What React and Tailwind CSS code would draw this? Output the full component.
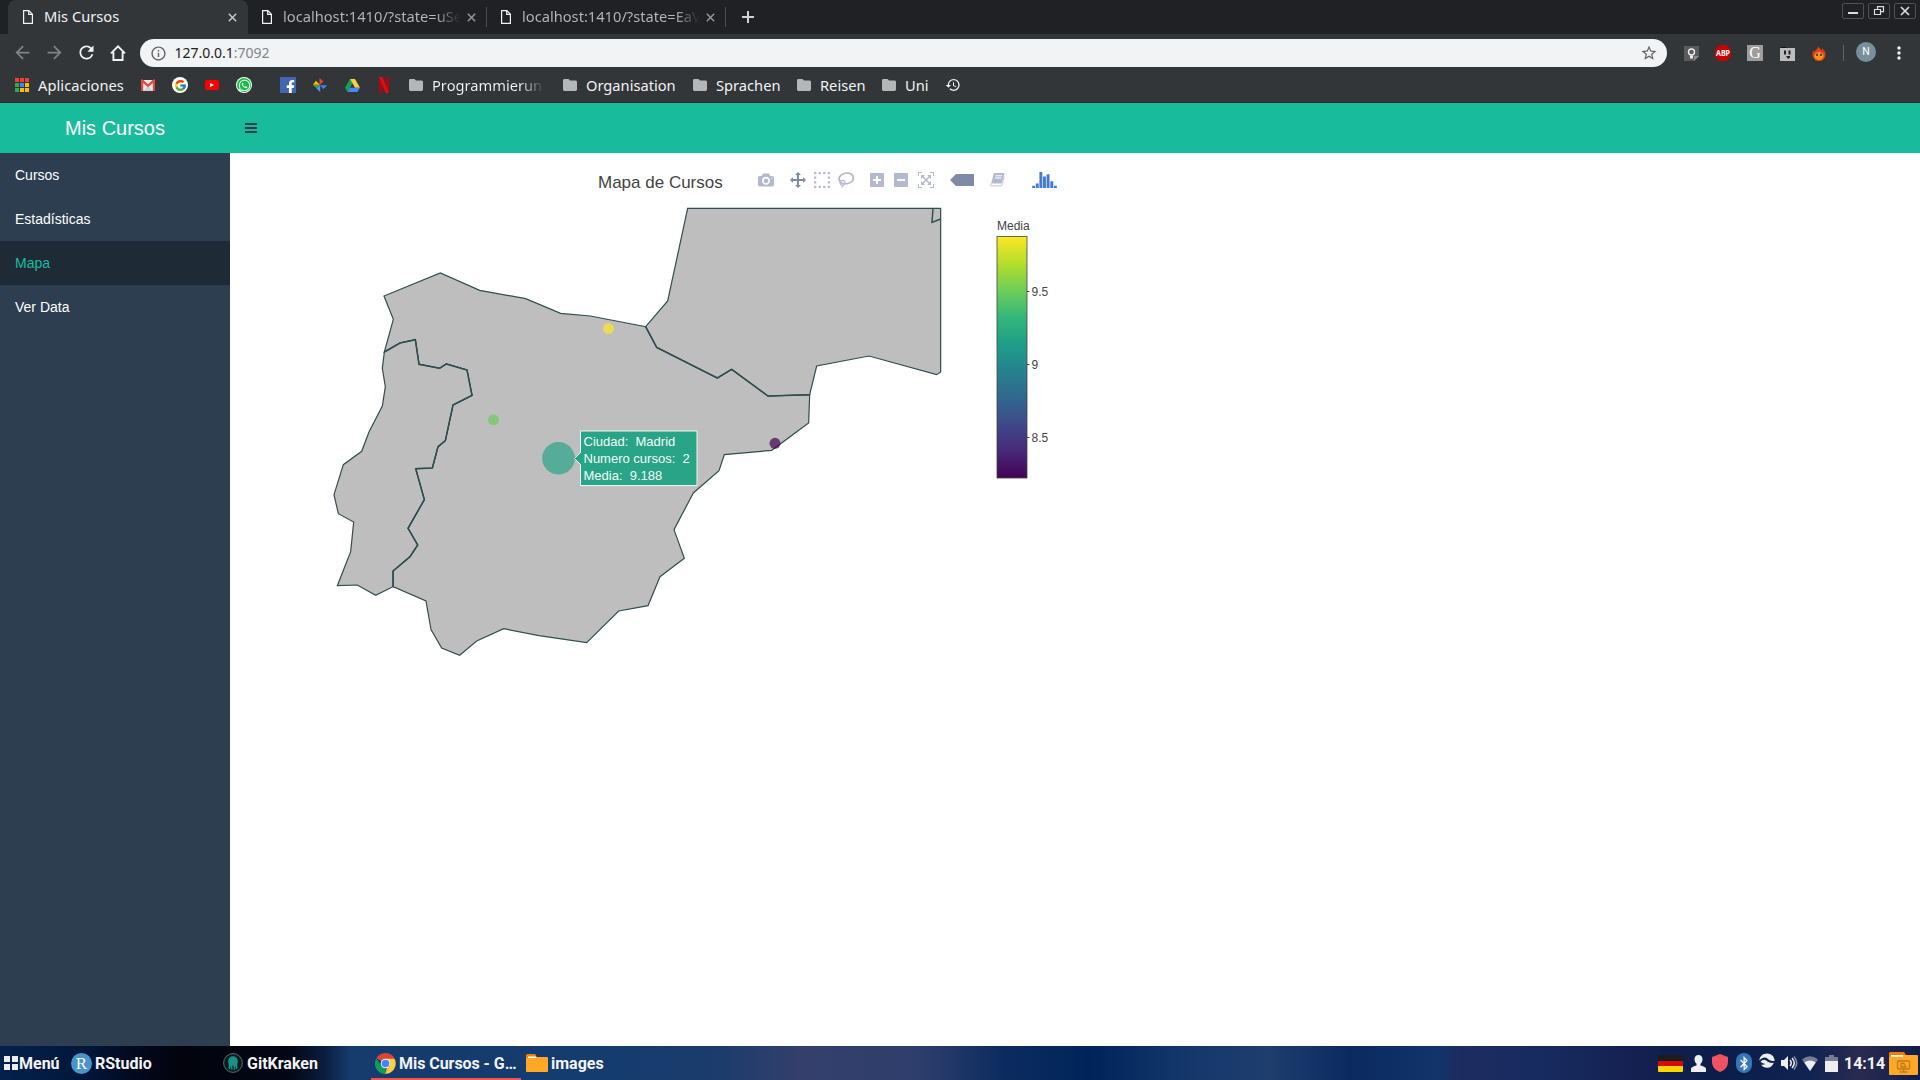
import React from "react";
import {
  MdArrowBack,
  MdArrowForward,
  MdRefresh,
  MdInfoOutline,
  MdStarBorder,
  MdHistory,
} from "react-icons/md";
import { FaWhatsapp, FaFacebookF, FaBluetoothB } from "react-icons/fa";
import { FcGoogle } from "react-icons/fc";

const FileIcon = () => (
  <svg className="block h-[14px] w-[10px]" viewBox="0 0 10 14" fill="none" stroke="#f1f3f4" strokeWidth="1.2">
    <path d="M.6.6h5.3l3.5 3.6v9.2H.6z M5.7.6v3.8h3.7" />
  </svg>
);

const CloseIcon = ({ className }) => (
  <svg className={className} viewBox="0 0 9 9" stroke="currentColor" strokeWidth="1.5">
    <path d="M.8.8l7.4 7.4M8.2.8L.8 8.2" />
  </svg>
);

function InactiveTab({ title }) {
  return (
    <div className="flex h-[34px] w-[239px] items-center">
      <div className="ml-[14px] h-[14px] w-[10px]">
        <FileIcon />
      </div>
      <div className="-mt-[2px] ml-[11px] w-[178px] overflow-hidden bg-gradient-to-r from-[#b6b9bd] from-86% to-[#202124] to-100% bg-clip-text whitespace-nowrap text-transparent">
        {title}
      </div>
      <CloseIcon className="ml-[6px] h-[9px] w-[9px] text-[#94979b]" />
      <div className="ml-auto h-5 w-px bg-[#4b4d51]" />
    </div>
  );
}

function WindowButton({ children }) {
  return (
    <div className="flex h-4 w-[22px] items-center justify-center rounded-[2px] border border-[#505153]">
      <svg className="h-[14px] w-[20px]" viewBox="0 0 20 14" fill="none" stroke="#dcdcdc" strokeWidth="1.5">
        {children}
      </svg>
    </div>
  );
}

function TabStrip() {
  return (
    <div className="flex h-[34px] bg-[#202124] text-[14.67px]">
      <div className="ml-2 flex h-[34px] w-[240px] items-center rounded-t-lg bg-[#323639] text-[#f1f3f4]">
        <div className="ml-[15px] h-[14px] w-[10px]">
          <FileIcon />
        </div>
        <span className="-mt-[2px] ml-[11px]">Mis Cursos</span>
        <CloseIcon className="mr-[11px] ml-auto h-[9px] w-[9px] text-[#c6c8ca]" />
      </div>
      <InactiveTab title="localhost:1410/?state=uSe" />
      <InactiveTab title="localhost:1410/?state=EaV" />
      <svg className="mt-[11px] ml-4 h-3 w-3" viewBox="0 0 12 12" stroke="#cfd1d4" strokeWidth="2">
        <path d="M6 0v12M0 6h12" />
      </svg>
      <div className="mt-[3px] mr-1 ml-auto flex gap-1">
        <WindowButton>
          <path d="M5 9h10" strokeWidth="2" />
        </WindowButton>
        <WindowButton>
          <path d="M5.500 5.500h6v5h-6zM8.500 5V2.700h6v5h-2.500" strokeWidth="1.200" />
        </WindowButton>
        <WindowButton>
          <path d="M6 3l8 8M14 3l-8 8" strokeWidth="1.700" />
        </WindowButton>
      </div>
    </div>
  );
}

function Toolbar() {
  return (
    <div className="flex h-[36px] items-center bg-[#323639] pt-[2px]">
      <MdArrowBack className="ml-[12px] -mt-[2px] h-[21px] w-[21px] text-[#808386]" />
      <MdArrowForward className="ml-[11px] -mt-[2px] h-[21px] w-[21px] text-[#808386]" />
      <MdRefresh className="ml-[11px] -mt-[2px] h-[21px] w-[21px] text-[#f1f3f4]" />
      <svg className="ml-[13px] -mt-[1px] h-4 w-4" viewBox="0 0 16 16" fill="none" stroke="#f1f3f4" strokeWidth="1.900">
        <path d="M1 8.300L8 1.300l7 7M3.400 7v8h9.200V7" />
      </svg>
      <div className="ml-[14px] flex h-[28px] w-[1527px] items-center rounded-full bg-[#f1f3f4] text-sm text-[#202124]">
        <MdInfoOutline className="ml-[9.500px] h-[17px] w-[17px] text-[#5f6368]" />
        <span className="ml-[8px]">
          127.0.0.1<span className="text-[#80868b]">:7092</span>
        </span>
        <MdStarBorder className="mr-[9px] ml-auto h-[18px] w-[18px] text-[#5f6368]" />
      </div>
      <svg className="ml-[17px] h-[15px] w-[15px]" viewBox="0 0 15 15">
        <path d="M0 0h15v10l-5 5H0z" fill="#5b5b5b" />
        <path d="M15 10h-5v5z" fill="#8b8b8b" />
        <circle cx="7.500" cy="6" r="3" fill="none" stroke="#eee" strokeWidth="1.400" />
        <path d="M6 9.500h3v3H6z" fill="#eee" />
      </svg>
      <svg className="ml-4 h-4 w-4" viewBox="0 0 16 16">
        <path d="M4.700 0h6.600L16 4.700v6.600L11.300 16H4.700L0 11.300V4.700z" fill="#c80000" />
        <text x="8" y="10.900" textAnchor="middle" fontSize="8" fontWeight="700" fill="#fff" textLength="14" lengthAdjust="spacingAndGlyphs">ABP</text>
      </svg>
      <div className="ml-4 flex h-4 w-4 items-center justify-center bg-[#9d9d9d] font-['Liberation_Serif'] text-[16px] leading-none text-white">
        G
      </div>
      <svg className="ml-[17px] h-[15px] w-[15px]" viewBox="0 0 15 15">
        <path d="M0 2h15v13H0z" fill="#bdbdbd" />
        <path d="M1 1h5v1H1z" fill="#111" />
        <path d="M4 4.500h2v4H4zM8.500 4.500h2v4h-2zM6 10h4v1.500l-2 1.500z" fill="#222" />
      </svg>
      <svg className="ml-[17px] h-[15px] w-[14px]" viewBox="0 0 14 15">
        <path d="M6 0c.5 2 3 2.500 3.500 4.500.8-.7 1-1.500.7-2.700C12 3.500 11.500 5 12 6c.4-.4.6-1 .6-1.600C14 7 13.600 9 13 11a6.400 6.400 0 0 1-12 0C.4 9 0 7 1.400 4.400c0 .6.200 1.200.6 1.600C3 4 6 3 6 0z" fill="#e0401a" />
        <ellipse cx="7" cy="10" rx="4.600" ry="4" fill="#f9960f" />
        <path d="M4.300 7.800h1.500v2.200H4.300zM8.300 7.800h1.500v2.200H8.300z" fill="#3a1a10" />
      </svg>
      <div className="ml-[17px] h-4 w-px bg-[#5f6368]" />
      <div className="-mt-[2px] ml-[12px] flex h-5 w-5 items-center justify-center rounded-full bg-[#78909c] font-[Roboto] text-[10.500px] text-white">
        N
      </div>
      <svg className="ml-[21px] -mt-px h-[14px] w-1" viewBox="0 0 4 14" fill="#f1f3f4">
        <circle cx="2" cy="2" r="1.700" />
        <circle cx="2" cy="7" r="1.700" />
        <circle cx="2" cy="12" r="1.700" />
      </svg>
    </div>
  );
}

const FolderGlyph = () => (
  <svg className="h-3 w-[14px] shrink-0" viewBox="0 0 14 12" fill="#b4b6b8">
    <path d="M1.400 0h4.200L7 1.600h5.600A1.400 1.400 0 0 1 14 3v7.600a1.400 1.400 0 0 1-1.400 1.400H1.400A1.400 1.400 0 0 1 0 10.600V1.400A1.400 1.400 0 0 1 1.400 0z" />
  </svg>
);

function FolderBookmark({ label, width }) {
  return (
    <div className={`flex items-center ${width}`}>
      <FolderGlyph />
      <span className="-mt-px ml-[9px]">{label}</span>
    </div>
  );
}

const APP_COLORS = [
  "#ea4335", "#ea4335", "#ea4335",
  "#34a853", "#4285f4", "#fbbc05",
  "#34a853", "#fbbc05", "#fbbc05",
];

function Bookmarks() {
  return (
    <div className="flex h-[32px] items-center bg-[#323639] pb-[2px] text-[14.67px] text-[#f1f3f4]">
      <div className="ml-[15px] grid w-[14px] grid-cols-3 gap-x-[1.500px] gap-y-[1.500px]">
        {APP_COLORS.map((c, i) => (
          <div key={i} className="h-[3.500px] w-[3.500px]" style={{ background: c }} />
        ))}
      </div>
      <div className="-mt-px ml-[9px] w-[103px] tracking-[0.060px]">Aplicaciones</div>
      <svg className="h-[12px] w-[14px]" viewBox="0 0 14 12">
        <path d="M0 1h14v11H0z" fill="#e8e8e8" />
        <path d="M2.500 12l4.500-5 4.500 5z" fill="#cfcfcf" />
        <path d="M0 .5h1.800L7 5.200 12.200.5H14V12h-2.200V4L7 8.200 2.200 4v8H0z" fill="#dd4b3e" />
      </svg>
      <div className="ml-[17px] flex h-4 w-4 items-center justify-center rounded-full bg-white">
        <FcGoogle className="h-[13px] w-[13px]" />
      </div>
      <div className="ml-[17px] flex h-[10px] w-[14px] items-center justify-center rounded-[2px] bg-[#f00]">
        <svg className="h-1 w-1" viewBox="0 0 4 4">
          <path d="M0 0l4 2-4 2z" fill="#fff" />
        </svg>
      </div>
      <div className="ml-[17px] flex h-4 w-4 items-center justify-center rounded-full bg-white">
        <div className="flex h-[14px] w-[14px] items-center justify-center rounded-full bg-[#0fbf3f]">
          <FaWhatsapp className="h-[13px] w-[13px] text-white" />
        </div>
      </div>
      <div className="ml-[28px] flex h-4 w-4 items-end justify-end overflow-hidden bg-[#4267b2]">
        <FaFacebookF className="mr-[1px] -mb-[1px] h-[14px] w-[9px] text-white" />
      </div>
      <svg className="ml-[17px] h-[14px] w-[14px]" viewBox="0 0 14 14">
        <path d="M6.500 0l4 3.500-4 3.500z" fill="#ea4335" />
        <path d="M14 7.200l-3.500 3.800L7 7.200z" fill="#4285f4" />
        <path d="M7.200 14L3.500 10.500 7.200 7z" fill="#5f8df0" />
        <path d="M0 6.800L2.800 2.800 7 6.800z" fill="#fbbc05" />
        <path d="M0 7h7L3.800 10.500z" fill="#34a853" />
      </svg>
      <svg className="ml-[18px] h-[13px] w-[15px]" viewBox="0 0 15 13">
        <path d="M5 0L7.500 4.300 2.500 13 0 8.700z" fill="#12a35d" />
        <path d="M5 0h5l5 8.700h-5z" fill="#fdcc3f" />
        <path d="M5 8.700h10L12.500 13h-10z" fill="#4a86ef" />
      </svg>
      <svg className="ml-[19px] h-4 w-[10px]" viewBox="0 0 10 16">
        <path d="M0 0h3.500v16H0zM6.500 0H10v16H6.500z" fill="#a90912" />
        <path d="M0 0h3.500L10 16H6.500z" fill="#e50914" />
      </svg>
      <div className="ml-[20px] flex w-[154px] items-center">
        <FolderGlyph />
        <div className="-mt-px ml-[9px] w-[113px] bg-gradient-to-r from-[#f1f3f4] from-78% to-[#323639] to-100% bg-clip-text whitespace-nowrap text-transparent">
          Programmierun
        </div>
      </div>
      <FolderBookmark label="Organisation" width="w-[130px]" />
      <FolderBookmark label="Sprachen" width="w-[104px]" />
      <FolderBookmark label="Reisen" width="w-[85px]" />
      <FolderBookmark label="Uni" width="w-[63px]" />
      <MdHistory className="h-4 w-4" />
    </div>
  );
}

const MENU = ["Cursos", "Estadísticas", "Mapa", "Ver Data"];

function Sidebar() {
  return (
    <nav className="w-[230px] bg-[#2c3e50] text-sm text-white">
      {MENU.map((item) => (
        <div
          key={item}
          className={
            item === "Mapa"
              ? "flex h-[44px] items-center bg-[#1e2b37] pl-[15px] text-[#18bc9c]"
              : "flex h-[44px] items-center pl-[15px]"
          }
        >
          {item}
        </div>
      ))}
    </nav>
  );
}

const MODEBAR = [
  { w: 1000, cls: "w-4", d: "m500 450c-83 0-150-67-150-150 0-83 67-150 150-150 83 0 150 67 150 150 0 83-67 150-150 150z m400 150h-120c-16 0-34 13-39 29l-31 93c-6 15-23 28-40 28h-340c-16 0-34-13-39-28l-31-94c-6-15-23-28-40-28h-120c-55 0-100-45-100-100v-450c0-55 45-100 100-100h800c55 0 100 45 100 100v450c0 55-45 100-100 100z m-400-550c-138 0-250 112-250 250 0 138 112 250 250 250 138 0 250-112 250-250 0-138-112-250-250-250z m365 380c-19 0-35 16-35 35 0 19 16 35 35 35 19 0 35-16 35-35 0-19-16-35-35-35z" },
  { w: 1000, cls: "ml-4 w-4", active: true, d: "m1000 350l-187 188 0-125-250 0 0 250 125 0-188 187-187-187 125 0 0-250-250 0 0 125-188-188 186-187 0 125 252 0 0-250-125 0 187-188 188 188-125 0 0 250 250 0 0-126 187 188z" },
  { w: 1000, cls: "ml-2 w-4", d: "m0 850l0-143 143 0 0 143-143 0z m286 0l0-143 143 0 0 143-143 0z m285 0l0-143 143 0 0 143-143 0z m286 0l0-143 143 0 0 143-143 0z m-857-286l0-143 143 0 0 143-143 0z m857 0l0-143 143 0 0 143-143 0z m-857-285l0-143 143 0 0 143-143 0z m857 0l0-143 143 0 0 143-143 0z m-857-286l0-143 143 0 0 143-143 0z m286 0l0-143 143 0 0 143-143 0z m285 0l0-143 143 0 0 143-143 0z m286 0l0-143 143 0 0 143-143 0z" },
  { w: 1031, cls: "ml-2 w-[16.500px]", d: "m1018 538c-36 207-290 336-568 286-277-48-473-256-436-463 10-57 36-108 76-151-13-66 11-137 68-183 34-28 75-41 114-42l-55-70 0 0c-2-1-3-2-4-3-10-14-8-34 5-45 14-11 34-8 45 4 1 1 2 3 2 5l0 0 113 140c16 11 31 24 45 40 4 3 6 7 8 11 48-3 100 0 151 9 278 48 473 255 436 462z m-624-379c-80 14-149 48-197 96 42 42 109 47 156 9 33-26 47-66 41-105z m-187-74c-19 16-33 37-39 60 50-32 109-55 174-68-42-25-95-24-135 8z m360 75c-34-7-69-9-102-8 8 62-16 128-68 170-73 59-175 54-244-5-9 20-16 40-20 61-28 159 121 317 333 354s407-60 434-217c28-159-121-318-333-355z" },
  { w: 875, cls: "ml-[15.500px] w-[14px]", d: "m1 787l0-875 875 0 0 875-875 0z m687-500l-187 0 0-187-125 0 0 187-188 0 0 125 188 0 0 187 125 0 0-187 187 0 0-125z" },
  { w: 875, cls: "ml-[10px] w-[14px]", d: "m0 788l0-876 875 0 0 876-875 0z m688-500l-500 0 0 125 500 0 0-125z" },
  { w: 1000, cls: "ml-[10px] w-4", d: "m250 850l-187 0-63 0 0-62 0-188 63 0 0 188 187 0 0 62z m688 0l-188 0 0-62 188 0 0-188 62 0 0 188 0 62-62 0z m-875-938l0 188-63 0 0-188 0-62 63 0 187 0 0 62-187 0z m875 188l0-188-188 0 0-62 188 0 62 0 0 62 0 188-62 0z m-125 188l-1 0-93-94-156 156 156 156 92-93 2 0 0 250-250 0 0-2 93-92-156-156-156 156 94 92 0 2-250 0 0-250 0 0 93 93 157-156-157-156-93 94 0 0 0-250 250 0 0 0-94 93 156 157 156-157-93-93 0 0 250 0 0 250z" },
  { w: 1500, cls: "ml-4 w-6", active: true, d: "m375 725l0 0-375-375 375-374 0-1 1125 0 0 750-1125 0z" },
];

function ModeBar() {
  return (
    <div className="flex h-4 items-center">
      {MODEBAR.map((icon, i) => (
        <svg key={i} className={`h-4 shrink-0 ${icon.cls}`} viewBox={`0 0 ${icon.w} 1000`}>
          <path
            d={icon.d}
            transform="matrix(1 0 0 -1 0 850)"
            fill={icon.active ? "#7f8ba6" : "#b3bad0"}
          />
        </svg>
      ))}
      <svg className="ml-[16px] h-4 w-[15px] shrink-0" viewBox="0 0 15 16">
        <path d="M4.500 1h9q1.200 0 .9 1.200L12 10.500q-.4 1-1.400 1H1.200L3.600 2Q3.800 1 4.500 1z" fill="#b3bad0" />
        <path d="M5.500 3.800h6.500M5 6h6.300" stroke="#fff" strokeWidth="1" />
        <path d="M1 11.500q-.8 2.300 1 2.300h8.500q1.200 0 1.500-1.200L14.300 4.500" fill="none" stroke="#ccd1e0" strokeWidth="1.300" />
      </svg>
      <svg className="ml-[27px] h-4 w-[25px] shrink-0" viewBox="0 0 1542 1000">
        <path
          d="m0-10h182v-140h-182v140z m228 146h183v-286h-183v286z m225 714h182v-1000h-182v1000z m225-285h182v-715h-182v715z m225 142h183v-857h-183v857z m231-428h182v-429h-182v429z m225-291h183v-138h-183v138z"
          transform="matrix(1 0 0 -1 0 850)"
          fill="#447adb"
        />
      </svg>
    </div>
  );
}

const SPAIN =
  "M193 456L220 358L192 288L361 219L479 271L617 296L722 340L811 348L977 380L1010 442L1192 534L1235 508L1344 588L1469 584L1466 669L1355 751L1213 764L1197 812L1120 879L1062 989L1093 1075L1020 1130L984 1217L896 1233L800 1328L657 1307L551 1286L470 1323L419 1366L365 1344L333 1289L318 1203L219 1160";
const BORDER =
  "L219 1113L270 1070L293 1035L264 985L313 899L287 806L337 804L354 740L376 722L399 615L456 586L441 510L379 492L359 505L297 493L286 419L240 429Z";
const PORTUGAL =
  "M193 456L187 505L196 560L187 618L147 696L125 754L70 794L42 884L55 941L101 966L92 1055L52 1157L112 1155L167 1186L219 1160";
const FRANCE =
  "M977 380L1043 303L1103 25L1862 25L1862 516L1850 524L1647 468L1490 498L1469 584L1344 588L1235 508L1192 534L1010 442Z";
const SHARED_BORDERS = [
  "M219 1160L219 1113L270 1070L293 1035L264 985L313 899L287 806L337 804L354 740L376 722L399 615L456 586L441 510L379 492L359 505L297 493L286 419L240 429L193 456",
  "M977 380L1010 442L1192 534L1235 508L1344 588L1469 584",
  "M1839 25L1836 67L1862 57",
];

const VIRIDIS = [
  "#fde725", "#b5de2b", "#6ece58", "#35b779", "#1f9e89",
  "#26828e", "#31688e", "#3e4989", "#482878", "#440154",
];

function CourseMap() {
  return (
    <svg
      className="block h-[839px] w-[1690px] font-['Liberation_Sans',sans-serif]"
      viewBox="230 207 1690 839"
    >
      <defs>
        <linearGradient id="viridis" x1="0" y1="0" x2="0" y2="1">
          {VIRIDIS.map((c, i) => (
            <stop key={c} offset={i / 9} stopColor={c} />
          ))}
        </linearGradient>
      </defs>
      <g transform="translate(320 200) scale(0.33333)" fill="#bebebe" stroke="#2f4f4f" strokeWidth="3.600">
        <path d={SPAIN + BORDER} />
        <path d={PORTUGAL + BORDER} />
        <path d={FRANCE} />
        {SHARED_BORDERS.map((d) => (
          <path key={d} d={d} fill="none" strokeWidth="4.400" />
        ))}
      </g>
      <g fillOpacity="0.700">
        <circle cx="608.500" cy="328.600" r="5.500" fill="#fde725" />
        <circle cx="493.500" cy="419.800" r="5.500" fill="#6ccd5a" />
        <circle cx="775" cy="443.300" r="5.500" fill="#440154" />
        <circle cx="558.500" cy="458.300" r="16.300" fill="#28a487" />
      </g>
      <path d="M574.500 458.500l6-6v-21.500h116.500v54.500h-116.500v-21z" fill="#28a487" stroke="#f2f6f5" strokeWidth="1" />
      <g fontSize="13" fill="#f5fbf9">
        <text x="583.500" y="446">{"Ciudad:\u00a0 Madrid"}</text>
        <text x="583.500" y="463">{"Numero cursos:\u00a0 2"}</text>
        <text x="583.500" y="480">{"Media:\u00a0 9.188"}</text>
      </g>
      <rect x="997" y="236.500" width="30" height="241.500" fill="url(#viridis)" stroke="#444" strokeOpacity=".8" />
      <g stroke="#444">
        <path d="M1027 291.500h2.500M1027 364.500h2.500M1027 437.500h2.500" />
      </g>
      <g fontSize="12" fill="#444">
        <text x="997" y="230">Media</text>
        <text x="1031.500" y="296">9.5</text>
        <text x="1031.500" y="369">9</text>
        <text x="1031.500" y="442">8.5</text>
      </g>
    </svg>
  );
}

function Dashboard() {
  return (
    <div className="flex h-[943px] flex-col font-['Liberation_Sans',sans-serif]">
      <header className="flex h-[50px] items-center bg-[#18bc9c]">
        <div className="w-[230px] text-center text-xl text-white">Mis Cursos</div>
        <div className="ml-[15px] flex flex-col gap-[2px]">
          <div className="h-[2px] w-3 bg-[#2c3e50]" />
          <div className="h-[2px] w-3 bg-[#2c3e50]" />
          <div className="h-[2px] w-3 bg-[#2c3e50]" />
        </div>
      </header>
      <div className="flex flex-1">
        <Sidebar />
        <main className="w-[1690px] bg-white">
          <div className="flex h-[54px] items-center">
            <h1 className="ml-[368px] w-[160px] pt-[4px] text-[17px] leading-none text-[#444]">
              Mapa de Cursos
            </h1>
            <ModeBar />
          </div>
          <CourseMap />
        </main>
      </div>
    </div>
  );
}

function Taskbar() {
  return (
    <div className="flex h-[34px] items-center bg-[linear-gradient(90deg,#04214d_0px,#021638_90px,#020a20_130px,#02030c_180px,#030716_290px,#0a1d40_325px,#163b6d_350px,#143c6e_600px,#1b3c6c_720px,#343f6c_800px,#2e3e6c_920px,#0d2c60_1000px,#00245a_1090px,#13366a_1180px,#1f3e6e_1270px,#0a2a60_1350px,#12346a_1440px,#1d2c60_1460px,#172b60_1540px,#142050_1640px,#0b1d4b_1720px,#102351_1810px,#2a2a50_1860px,#101d48_1920px)] font-[Roboto] text-[16px] font-bold text-[#f3f3f3]">
      <div className="ml-1 grid grid-cols-2 gap-[2px]">
        <div className="h-[6px] w-[6px] bg-[#eee]" />
        <div className="h-[6px] w-[6px] bg-[#eee]" />
        <div className="h-[6px] w-[6px] bg-[#eee]" />
        <div className="h-[6px] w-[6px] bg-[#eee]" />
      </div>
      <div className="ml-px w-[52px] pt-px">Menú</div>
      <div className="flex h-[21px] w-[21px] items-center justify-center rounded-full bg-[#4a94c9] font-['Liberation_Serif'] text-[17px] leading-none font-normal text-white">
        R
      </div>
      <div className="ml-[3px] w-[128px] pt-px">RStudio</div>
      <svg className="h-5 w-5" viewBox="0 0 20 20">
        <circle cx="10" cy="10" r="9.400" fill="#0c1a1e" stroke="#5d7a7b" strokeWidth=".9" />
        <path d="M10 3.300c3 0 4.800 2.300 4.800 5.200 0 1.800-.6 2.500-.6 3.500 0 1.500.4 2 .2 3.500l-1.600 1-.6-4-.6 4.500h-1V12.500h-1.200V17h-1l-.6-4.500-.6 4-1.600-1c-.2-1.500.2-2 .2-3.500 0-1-.6-1.700-.6-3.500 0-2.900 1.800-5.200 4.800-5.200z" fill="#179287" />
      </svg>
      <div className="ml-[4px] w-[124px] pt-px">GitKraken</div>
      <div className="flex h-[34px] w-[150px] items-center border-b-2 border-[#f0544c] pt-[2px]">
        <svg className="ml-1 h-[21px] w-[21px]" viewBox="0 0 48 48">
          <path d="M24 24L3.200 12A24 24 0 0 1 44.800 12z" fill="#db4437" />
          <path d="M24 13h20.800A24 24 0 0 1 24 48l9.500-18.500z" fill="#ffcd40" />
          <path d="M3.200 12l11.300 17.500L24 35l0 13A24 24 0 0 1 3.200 12z" fill="#0f9d58" />
          <path d="M33.500 29.500L24 48h-1l4-14z" fill="#ffcd40" />
          <circle cx="24" cy="24" r="11" fill="#f1f1f1" />
          <circle cx="24" cy="24" r="8.700" fill="#4285f4" />
        </svg>
        <div className="ml-[3px] pt-px tracking-[-0.050px] whitespace-nowrap">Mis Cursos - G…</div>
      </div>
      <svg className="ml-[5px] h-[18px] w-[22px]" viewBox="0 0 22 18">
        <path d="M1 0h8l2 3v3H0V1z" fill="#f57c00" />
        <path d="M0 4l10-1h11q1 0 1 1v13q0 1-1 1H1q-1 0-1-1z" fill="#ffa726" />
        <path d="M2 2.500h8v1.500H2z" fill="#fff" />
      </svg>
      <div className="ml-[3px] pt-px">images</div>

      <div className="ml-auto h-[17px] w-[25px] overflow-hidden rounded-[1px]">
        <div className="h-[6px] bg-[#1c1c1c]" />
        <div className="h-[5px] bg-[#d80808]" />
        <div className="h-[6px] bg-[#ffd500]" />
      </div>
      <svg className="ml-2 h-[17px] w-[15px]" viewBox="0 0 15 17" fill="#eee">
        <path d="M7.500 0c2.600 0 4 1.900 4 4.300 0 2-1 3.700-2 4.500v1.700c2.500.6 5 1.500 5.500 3V17H0v-3.500c.5-1.500 3-2.400 5.500-3V8.800c-1-.8-2-2.500-2-4.500C3.500 1.900 4.900 0 7.500 0z" />
      </svg>
      <svg className="ml-[6px] h-[18px] w-4" viewBox="0 0 16 18">
        <path d="M8 0l8 3v5c0 5-3.500 8.500-8 10C3.500 16.500 0 13 0 8V3z" fill="#ef5361" />
      </svg>
      <div className="ml-2 flex h-5 w-4 items-center justify-center rounded-[8px] bg-[#3776b4]">
        <FaBluetoothB className="h-[15px] w-[12px] text-white" />
      </div>
      <svg className="-mt-1 ml-[7px] h-4 w-4" viewBox="0 0 16 16">
        <path d="M.4 7.500C.4 3.300 4 .5 8 .5c4.200 0 7.600 3 7.600 7.400-3 .6-5.600-.6-7.200-2.400C6 3.600 3 4.600.4 7.500z" fill="#eee" />
        <path d="M1.500 9c1.500-1.900 3.700-3 5.700-1.400 2 1.900 4.600 2.700 7.600 2.200-1 3-3.600 5-6.600 5-2.500 0-5-1.200-6-3.300 1.500.4 3 .2 4-.6C4.700 10.500 3 10 1.500 9z" fill="#eee" />
      </svg>
      <svg className="ml-[6px] h-4 w-[17px]" viewBox="0 0 17 16">
        <path d="M0 5h3l4-4v14l-4-4H0z" fill="#eee" />
        <path d="M9 5q2.500 3 0 6M11 3q4.500 5 0 10" stroke="#eee" strokeWidth="1.500" fill="none" />
        <path d="M13 1.500q5.500 6.500 0 13" stroke="#8a90a8" strokeWidth="1.500" fill="none" />
      </svg>
      <svg className="ml-[4px] h-[15px] w-4" viewBox="0 0 16 15">
        <path d="M8 15L0 3.500Q8-3 16 3.500z" fill="#747c98" />
        <path d="M8 15L2.300 6.500Q8 2.500 13.700 6.500z" fill="#eee" />
      </svg>
      <svg className="ml-[7px] h-[17px] w-[13px]" viewBox="0 0 13 17">
        <path d="M4 0h5v2h4v4H0V2h4z" fill="#747c98" />
        <path d="M0 6h13v11H0z" fill="#eee" />
      </svg>
      <div className="ml-[6px] w-[45px] pt-px">14:14</div>
      <svg className="mr-[2px] h-[23px] w-[29px]" viewBox="0 0 29 23">
        <path d="M1 0h14l2 3v4H0V1z" fill="#f57c00" />
        <path d="M0 5l14-2h14q1 0 1 1v18q0 1-1 1H1q-1 0-1-1z" fill="#ffa726" />
        <path d="M2 3h12v1.800H2z" fill="#fff" />
        <g fill="none" stroke="#bd7b1c" strokeWidth="1.300">
          <rect x="8.500" y="9" width="12" height="8" rx="1" />
          <path d="M10.500 20h8M14.500 17v3M12 11.500h3l2 3.500h-5z" />
        </g>
      </svg>
    </div>
  );
}

export default function App() {
  return (
    <div className="h-[1080px] w-[1920px] overflow-hidden bg-white">
      <div className="font-['Noto_Sans',sans-serif]">
        <TabStrip />
        <Toolbar />
        <Bookmarks />
        <div className="h-px bg-[#26282b]" />
      </div>
      <Dashboard />
      <Taskbar />
    </div>
  );
}
